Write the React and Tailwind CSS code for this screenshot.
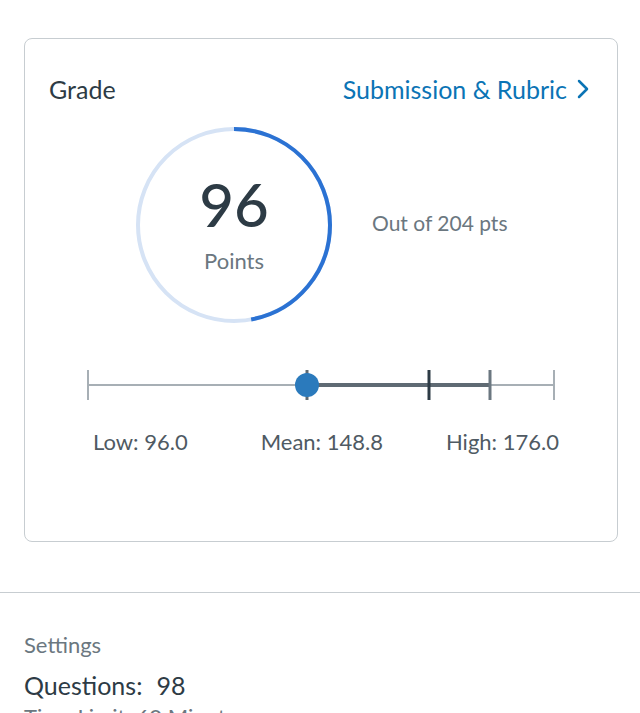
import React from "react";

const score = 96;
const total = 204;

const ProgressRing = () => {
    const r = 96;
    const c = 2 * Math.PI * r;
    const pct = score / total;
    return (
        <div className="relative w-[200px] h-[200px] flex flex-col items-center justify-center shrink-0">
            <svg className="absolute inset-0" width="200" height="200" viewBox="0 0 200 200">
                <circle cx="100" cy="100" r={r} fill="none" stroke="#d6e3f5" strokeWidth="4" />
                <circle
                    cx="100"
                    cy="100"
                    r={r}
                    fill="none"
                    stroke="#2b72d3"
                    strokeWidth="4"
                    strokeDasharray={`${c * pct} ${c}`}
                    transform="rotate(-90 100 100)"
                />
            </svg>
            <div className="text-[60px] leading-[56px] text-[#2d3b45] font-medium">{score}</div>
            <div className="mt-[15px] text-[22px] leading-7 text-[#6b7780]">Points</div>
        </div>
    );
};

const StatsBar = () => (
    <svg width="592" height="40" viewBox="0 0 592 40" className="block">
        <line x1="63" y1="20" x2="529" y2="20" stroke="#a7afb5" strokeWidth="2" />
        <line x1="63" y1="5" x2="63" y2="35" stroke="#a7afb5" strokeWidth="2" />
        <line x1="529" y1="5" x2="529" y2="35" stroke="#a7afb5" strokeWidth="2" />
        <line x1="282" y1="20" x2="465" y2="20" stroke="#5f6a73" strokeWidth="4" />
        <line x1="404" y1="5" x2="404" y2="35" stroke="#2d3b45" strokeWidth="3" />
        <line x1="465" y1="5" x2="465" y2="35" stroke="#6b7780" strokeWidth="3" />
        <line x1="282" y1="5" x2="282" y2="35" stroke="#5f6a73" strokeWidth="3" />
        <circle cx="282" cy="20" r="12" fill="#2b7abc" />
    </svg>
);

export default function App() {
    return (
        <div className="w-[640px] h-[713px] overflow-hidden bg-white font-['Lato','Noto_Sans',sans-serif]">
            <div className="pt-[38px] pb-[50px]">
                <div className="ml-6 mr-[22px] border border-[#c7cdd1] rounded-lg pt-[34px] pb-[85px]">
                    <div className="flex items-center justify-between pl-6 pr-[28px]">
                        <h2 className="text-[25px] leading-8 text-[#2d3b45]">Grade</h2>
                        <a className="flex items-center gap-[10px] text-[25px] leading-8 text-[#0b74b5]">
                            Submission &amp; Rubric
                            <svg width="12" height="20" viewBox="0 0 12 20" fill="none">
                                <path d="M2 2l8 8-8 8" stroke="#0b74b5" strokeWidth="2.5" strokeLinecap="round" strokeLinejoin="round" />
                            </svg>
                        </a>
                    </div>
                    <div className="flex items-center mt-5 pl-[109px]">
                        <ProgressRing />
                        <div className="ml-[38px] mb-1 text-[21px] leading-7 text-[#6b7780]">Out of {total} pts</div>
                    </div>
                    <div className="mt-[40px]">
                        <StatsBar />
                    </div>
                    <div className="flex mt-[23px] pl-[68px] text-[22px] leading-7 text-[#4f5a63]">
                        <span>Low: 96.0</span>
                        <span className="ml-[73px]">Mean: 148.8</span>
                        <span className="ml-[63px]">High: 176.0</span>
                    </div>
                </div>
            </div>
            <div className="border-t border-[#c7cdd1] px-6 pt-[38px]">
                <div className="text-[22px] leading-7 text-[#6b7780]">Settings</div>
                <div className="mt-[10px] text-[25px] leading-8 text-[#2d3b45]">
                    Questions:<span className="pl-[14px]">98</span>
                </div>
                <div className="mt-[2px] text-[22px] leading-7 text-[#6b7780]">Time Limit: 60 Minutes</div>
            </div>
        </div>
    );
}
